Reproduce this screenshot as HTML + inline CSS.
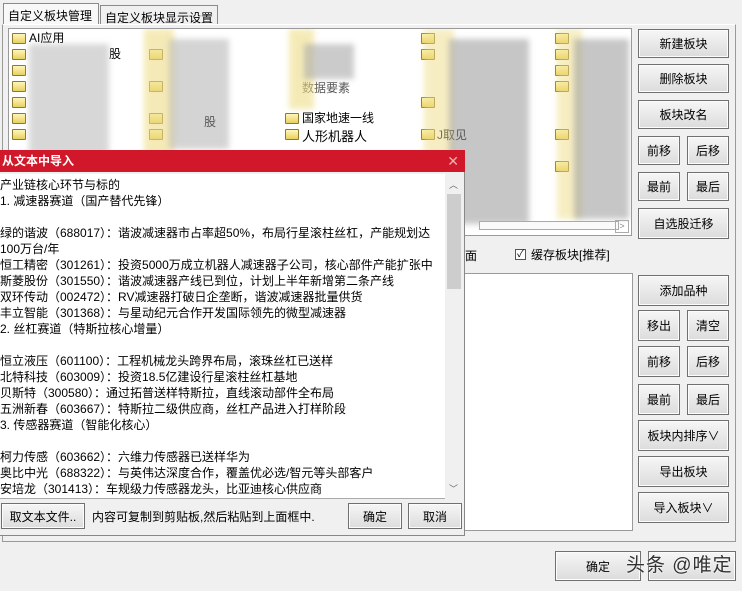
<!DOCTYPE html>
<html><head><meta charset="utf-8">
<style>
*{box-sizing:border-box;margin:0;padding:0}
body{width:742px;height:591px;background:#f0f0f0;position:relative;overflow:hidden;font-family:"Liberation Sans","Noto Sans CJK SC",sans-serif;font-size:12px;color:#000}
.a{position:absolute}
.btn{position:absolute;border:1px solid #707070;background:linear-gradient(#f6f6f6,#dcdcdc);display:flex;align-items:center;justify-content:center;font-size:12px;box-shadow:inset 0 0 0 1px #fcfcfc}
.tab{position:absolute;border:1px solid #8a8a8a;border-bottom:none;background:#f0f0f0;font-size:12px;padding:3px 4px 0}
.fold{position:absolute;width:14px;height:11px;border:1px solid #8a7a30;background:linear-gradient(#fff7b8,#e8d060);border-radius:1px}
.blur{position:absolute;filter:blur(3px)}
.lines div{height:16px;line-height:16px;white-space:nowrap}
</style></head><body>
<!-- tabs -->
<div class="tab" style="left:3px;top:3px;width:96px;height:22px;background:#f8f8f8">自定义板块管理</div>
<div class="tab" style="left:100px;top:5px;width:118px;height:20px">自定义板块显示设置</div>
<!-- main panel -->
<div class="a" style="left:2px;top:24px;width:734px;height:518px;border:1px solid #9a9a9a;border-top-color:#fff;background:#f0f0f0"></div>
<!-- top list -->
<div class="a" style="left:8px;top:28px;width:624px;height:208px;background:#fff;border:1px solid #9a9a9a;overflow:hidden">
 <div class="fold" style="left:3px;top:4px"></div><div class="a" style="left:20px;top:0px">AI应用</div>
 <div class="fold" style="left:3px;top:20px"></div><div class="a" style="left:100px;top:16px">股</div>
 <div class="fold" style="left:3px;top:36px"></div>
 <div class="fold" style="left:3px;top:52px"></div>
 <div class="fold" style="left:3px;top:68px"></div>
 <div class="fold" style="left:3px;top:84px"></div><div class="a" style="left:195px;top:84px">股</div>
 <div class="fold" style="left:3px;top:100px"></div>
 <div class="fold" style="left:140px;top:20px"></div><div class="fold" style="left:140px;top:52px"></div><div class="fold" style="left:140px;top:84px"></div><div class="fold" style="left:140px;top:100px"></div>
 <div class="fold" style="left:276px;top:84px"></div><div class="a" style="left:293px;top:80px">国家地速一线</div>
 <div class="fold" style="left:276px;top:100px"></div><div class="a" style="left:293px;top:97px;font-size:13px">人形机器人</div>
 <div class="a" style="left:293px;top:50px;color:#555">数据要素</div>
 <div class="fold" style="left:412px;top:4px"></div><div class="fold" style="left:412px;top:20px"></div><div class="fold" style="left:412px;top:100px"></div><div class="a" style="left:428px;top:97px">J取见</div>
 <div class="fold" style="left:412px;top:68px"></div>
 <div class="fold" style="left:546px;top:4px"></div><div class="fold" style="left:546px;top:20px"></div><div class="fold" style="left:546px;top:36px"></div><div class="fold" style="left:546px;top:52px"></div><div class="fold" style="left:546px;top:100px"></div><div class="fold" style="left:546px;top:132px"></div>
 <div class="blur" style="left:20px;top:15px;width:80px;height:120px;background:#b8b8b8;opacity:.55"></div>
 <div class="blur" style="left:135px;top:0;width:30px;height:130px;background:#eedd88;opacity:.6"></div>
 <div class="blur" style="left:160px;top:10px;width:60px;height:110px;background:#aaa;opacity:.5"></div>
 <div class="blur" style="left:280px;top:0;width:25px;height:80px;background:#eedd88;opacity:.6"></div>
 <div class="blur" style="left:295px;top:15px;width:50px;height:35px;background:#aaa;opacity:.6"></div>
 <div class="blur" style="left:415px;top:0;width:30px;height:200px;background:#eedd88;opacity:.5"></div>
 <div class="blur" style="left:440px;top:10px;width:80px;height:185px;background:#999;opacity:.55"></div>
 <div class="blur" style="left:548px;top:0;width:25px;height:190px;background:#eedd88;opacity:.5"></div>
 <div class="blur" style="left:565px;top:10px;width:55px;height:180px;background:#999;opacity:.55"></div>
 <div class="a" style="left:470px;top:192px;width:140px;height:9px;border:1px solid #aaa;background:#fafafa"></div>
 <div class="a" style="left:606px;top:191px;width:14px;height:13px;border:1px solid #aaa;color:#888;font-size:9px;text-align:center;line-height:11px">&gt;</div>
</div>
<!-- checkbox -->
<div class="a" style="left:465px;top:247px">面</div>
<div class="a" style="left:515px;top:249px;width:11px;height:11px;border:1px solid #555;background:#fff;font-size:10px;line-height:9px;text-align:center">✓</div>
<div class="a" style="left:531px;top:246px">缓存板块[推荐]</div>
<!-- lower list -->
<div class="a" style="left:462px;top:273px;width:171px;height:258px;background:#fff;border:1px solid #9a9a9a"></div>
<!-- right buttons -->
<div class="btn" style="left:638px;top:29px;width:91px;height:29px">新建板块</div>
<div class="btn" style="left:638px;top:64px;width:91px;height:29px">删除板块</div>
<div class="btn" style="left:638px;top:100px;width:91px;height:29px">板块改名</div>
<div class="btn" style="left:638px;top:136px;width:42px;height:29px">前移</div>
<div class="btn" style="left:687px;top:136px;width:42px;height:29px">后移</div>
<div class="btn" style="left:638px;top:172px;width:42px;height:29px">最前</div>
<div class="btn" style="left:687px;top:172px;width:42px;height:29px">最后</div>
<div class="btn" style="left:638px;top:208px;width:91px;height:31px">自选股迁移</div>
<div class="btn" style="left:638px;top:275px;width:91px;height:31px">添加品种</div>
<div class="btn" style="left:638px;top:310px;width:42px;height:31px">移出</div>
<div class="btn" style="left:687px;top:310px;width:42px;height:31px">清空</div>
<div class="btn" style="left:638px;top:346px;width:42px;height:31px">前移</div>
<div class="btn" style="left:687px;top:346px;width:42px;height:31px">后移</div>
<div class="btn" style="left:638px;top:384px;width:42px;height:31px">最前</div>
<div class="btn" style="left:687px;top:384px;width:42px;height:31px">最后</div>
<div class="btn" style="left:638px;top:420px;width:91px;height:31px">板块内排序∨</div>
<div class="btn" style="left:638px;top:456px;width:91px;height:31px">导出板块</div>
<div class="btn" style="left:638px;top:492px;width:91px;height:31px">导入板块∨</div>
<!-- bottom -->
<div class="btn" style="left:555px;top:551px;width:86px;height:30px;justify-content:flex-end;padding-right:30px">确定</div>
<div class="btn" style="left:648px;top:551px;width:88px;height:30px"></div>
<div class="a" style="left:626px;top:550px;font-size:19px;color:#333;letter-spacing:1px;text-shadow:0 0 2px #fff">头条 @唯定</div>
<!-- dialog -->
<div class="a" style="left:0;top:150px;width:465px;height:386px;background:#f0f0f0;border-right:1px solid #888;border-bottom:1px solid #888"></div>
<div class="a" style="left:0;top:150px;width:465px;height:22px;background:#d0182a;color:#fff;font-weight:bold;font-size:12px;line-height:22px;padding-left:2px">从文本中导入<span style="position:absolute;right:6px;top:0;font-weight:normal;color:#f0b0b0;font-size:14px">✕</span></div>
<div class="a" style="left:0;top:174px;width:463px;height:325px;background:#fff;border-bottom:1px solid #aaa">
 <div class="lines" style="position:absolute;left:0;top:3px">
  <div>产业链核心环节与标的</div>
  <div>1. 减速器赛道（国产替代先锋）</div>
  <div></div>
  <div>绿的谐波（688017）：谐波减速器市占率超50%，布局行星滚柱丝杠，产能规划达</div>
  <div>100万台/年</div>
  <div>恒工精密（301261）：投资5000万成立机器人减速器子公司，核心部件产能扩张中</div>
  <div>斯菱股份（301550）：谐波减速器产线已到位，计划上半年新增第二条产线</div>
  <div>双环传动（002472）：RV减速器打破日企垄断，谐波减速器批量供货</div>
  <div>丰立智能（301368）：与星动纪元合作开发国际领先的微型减速器</div>
  <div>2. 丝杠赛道（特斯拉核心增量）</div>
  <div></div>
  <div>恒立液压（601100）：工程机械龙头跨界布局，滚珠丝杠已送样</div>
  <div>北特科技（603009）：投资18.5亿建设行星滚柱丝杠基地</div>
  <div>贝斯特（300580）：通过拓普送样特斯拉，直线滚动部件全布局</div>
  <div>五洲新春（603667）：特斯拉二级供应商，丝杠产品进入打样阶段</div>
  <div>3. 传感器赛道（智能化核心）</div>
  <div></div>
  <div>柯力传感（603662）：六维力传感器已送样华为</div>
  <div>奥比中光（688322）：与英伟达深度合作，覆盖优必选/智元等头部客户</div>
  <div>安培龙（301413）：车规级力传感器龙头，比亚迪核心供应商</div>
 </div>
 <div class="a" style="left:445px;top:0;width:18px;height:325px;background:#f0f0f0">
  <div class="a" style="left:4px;top:4px;font-size:9px;color:#666">︿</div>
  <div class="a" style="left:2px;top:20px;width:14px;height:95px;background:#cdcdcd"></div>
  <div class="a" style="left:4px;top:308px;font-size:9px;color:#666">﹀</div>
 </div>
</div>
<div class="btn" style="left:1px;top:503px;width:84px;height:26px">取文本文件..</div>
<div class="a" style="left:92px;top:508px">内容可复制到剪贴板,然后粘贴到上面框中.</div>
<div class="btn" style="left:348px;top:503px;width:54px;height:26px">确定</div>
<div class="btn" style="left:408px;top:503px;width:54px;height:26px">取消</div>
</body></html>
